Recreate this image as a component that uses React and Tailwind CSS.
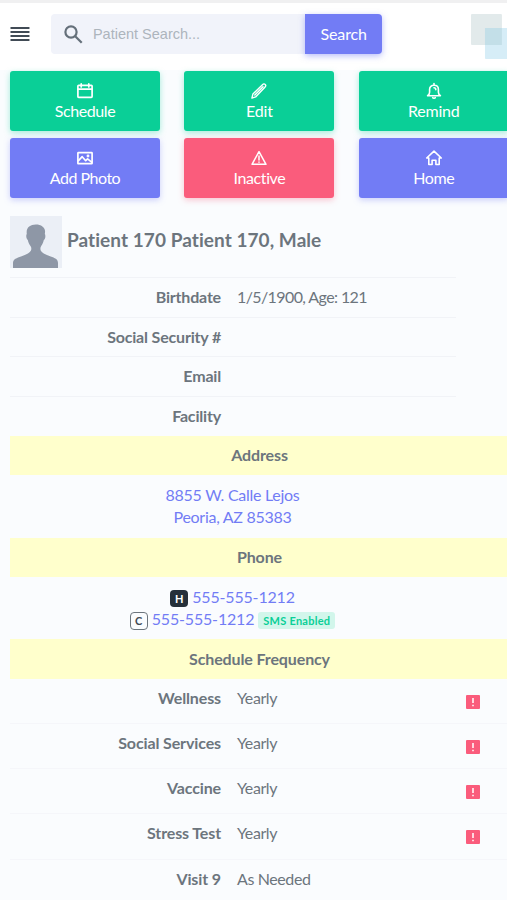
import React from "react";

const icon = "block h-[18px] w-[18px]";
const line = { fill: "none", stroke: "currentColor", strokeWidth: 1.7, strokeLinejoin: "round", strokeLinecap: "round" };

const CalendarIcon = () => (
  <svg className={icon} viewBox="0 0 18 18" {...line}>
    <rect x="1.9" y="3.3" width="14.2" height="12" rx="0.8" />
    <path d="M2 7.2h14M5.2 1.9v3M12.8 1.9v3" />
  </svg>
);
const PencilIcon = () => (
  <svg className={icon} viewBox="0 0 18 18" {...line} strokeWidth="1.4">
    <path d="M1.900 16.100l1-4L12.500 2.700c1-1 2-1 2.700-.3s.7 1.800-.3 2.800L5.600 14.900zM4.800 12.900L13 4.700" />
  </svg>
);
const BellIcon = () => (
  <svg className={icon} viewBox="0 0 18 18" {...line} strokeWidth="1.600">
    <path d="M2.600 13.700h12.800c-1.300-.9-2-2-2-3.500V7.300c0-2.500-1.900-4.100-4.400-4.100S4.600 4.800 4.600 7.300v2.900c0 1.500-.7 2.600-2 3.500zM9 1.500v1.500M9 5.800c1.200 0 1.800.8 1.800 2" />
    <path d="M7.700 15.600c.4.800 2.200.8 2.600 0" />
  </svg>
);
const PhotoIcon = () => (
  <svg className={icon} viewBox="0 0 18 18" {...line}>
    <rect x="1.900" y="3.700" width="14.200" height="11" rx="0.500" />
    <path d="M2.500 11.700l3.700-4 3.500 4 1.900-1.900 4 3.400" />
    <circle cx="12" cy="7" r="0.600" />
  </svg>
);
const WarningIcon = () => (
  <svg className={icon} viewBox="0 0 18 18" {...line} strokeWidth="1.500">
    <path d="M9 2.700L16 15.300H2zM9 7v4M9 13v.3" />
  </svg>
);
const HomeIcon = () => (
  <svg className={icon} viewBox="0 0 18 18" {...line} strokeWidth="1.600">
    <path d="M1.700 9L9 2.200 16.300 9h-2.100v6.500h-3.300v-4.300H7.100v4.300H3.800V9z" />
  </svg>
);

const green = "bg-[#0acf97] shadow-[0_2px_6px_rgba(10,207,151,0.35)]";
const blue = "bg-[#727cf5] shadow-[0_2px_6px_rgba(114,124,245,0.35)]";
const red = "bg-[#fa5c7c] shadow-[0_2px_6px_rgba(250,92,124,0.35)]";

const actions = [
  ["Schedule", CalendarIcon, green, "tracking-[-0.4px]"],
  ["Edit", PencilIcon, green, "tracking-[-0.2px]"],
  ["Remind", BellIcon, green, "tracking-[-0.2px]"],
  ["Add Photo", PhotoIcon, blue, "tracking-[-0.5px]"],
  ["Inactive", WarningIcon, red, "tracking-[-0.4px]"],
  ["Home", HomeIcon, blue, "tracking-[-0.4px]"],
];

const Section = ({ children }) => (
  <h2 className="flex h-[39.500px] w-[499px] items-center justify-center bg-[#ffffcc] pb-px text-[16px] font-bold tracking-[-0.120px]">{children}</h2>
);

const Field = ({ label, value }) => (
  <div className="flex h-[39.700px] w-[446px] items-center border-t border-[#f1f3f7] pb-px">
    <span className="w-[211px] text-right font-bold tracking-[-0.180px]">{label}</span>
    <span className="ml-4 tracking-[-0.600px]">{value}</span>
  </div>
);

const Frequency = ({ label, value, alert }) => (
  <div className="flex h-[45.200px] w-[499px] items-start border-b border-[#f5f6fa] pt-[7px] leading-[24px]">
    <span className="w-[211px] text-right font-bold tracking-[-0.120px]">{label}</span>
    <span className="ml-4 w-[229px] tracking-[-0.400px]">{value}</span>
    {alert && (
      <svg className="mt-[9px] h-[14px] w-[14px]" viewBox="0 0 14 14">
        <rect width="14" height="14" rx="1" fill="#fa5c7c" />
        <path d="M7 3v5M7 9.700v1.500" stroke="#fff" strokeWidth="1.500" />
      </svg>
    )}
  </div>
);

export default function App() {
  return (
    <div className="h-[900px] w-[507px] overflow-hidden bg-[#fafcfe] font-['Lato',sans-serif] text-[16px] text-[#6c757d]">
      <header className="flex h-[70px] items-start border-t-[3px] border-[#f0f0f1] bg-white pt-[11px]">
        <svg className="mt-[13px] ml-[10px] h-[14px] w-[20px]" viewBox="0 0 20 14" stroke="#414b55" strokeWidth="2">
          <path d="M0.500 1h19M0.500 5h19M0.500 9h19M0.500 13h19" />
        </svg>
        <div className="ml-[21px] flex h-10 w-[255px] items-center rounded-l bg-[#f1f3fa]">
          <svg className="ml-[13px] h-[19px] w-[19px]" viewBox="0 0 19 19" fill="none" stroke="#65707a" strokeWidth="2.200">
            <circle cx="7" cy="7" r="5.600" />
            <path d="M11.200 11.200l6.500 6.500" />
          </svg>
          <span className="mt-[2px] ml-[10px] font-['Liberation_Sans',sans-serif] text-[14.500px] text-[#adb5bd]">Patient Search...</span>
        </div>
        <button className="h-10 w-[77px] rounded-r bg-[#727cf5] pb-px tracking-[-0.150px] text-white shadow-[0_2px_6px_rgba(114,124,245,0.5)]">Search</button>
        <svg className="ml-[88px] h-[46px] w-[37px]" viewBox="0 0 37 46">
          <rect x="1" width="31" height="31" rx="1" fill="#e2eaeb" />
          <rect x="15" y="14" width="32" height="31" rx="1" fill="#d6edf7" />
          <path d="M15 14h17v17H15z" fill="#c3dfe8" />
        </svg>
      </header>
      <main className="pl-[10px]">
        <div className="grid w-[500px] grid-cols-[150px_150px_150px] gap-x-[24.400px] gap-y-[7px] pt-px">
          {actions.map(([label, Icon, color, fit]) => (
            <button key={label} className={`flex h-[60px] flex-col items-center rounded-[3px] pt-[11px] text-white ${color}`}>
              <Icon />
              <span className={`-mt-px leading-[24px] ${fit}`}>{label}</span>
            </button>
          ))}
        </div>
        <div className="mt-[18px] flex h-[61px] items-start">
          <svg className="h-[52px] w-[52px]" viewBox="0 0 52 52">
            <path fill="#ebeff6" d="M0 0h52v52H0z" />
            <path fill="#8e97a6" d="M3 52v-5c0-4 4-5 8-6.500 5-2 9-3.500 10-6 .6-2 .4-3-.5-4.500-1.500-2-2.300-4-2.700-6-1.600-.8-2-5-1-6-1-6 3-9.500 9-9.500s10.500 3.500 9 9.500c1 1 .7 5.200-1 6-.4 2-1.200 4-2.600 6-.9 1.500-1 2.500-.5 4.500 1 2.500 5 4 10 6 4 1.500 7.300 2.500 7.300 6.500v5z" />
          </svg>
          <h1 className="mt-[11px] ml-[5px] text-[19px] leading-[26px] font-bold tracking-[0.060px]">Patient 170 Patient 170, Male</h1>
        </div>
        <Field label="Birthdate" value="1/5/1900, Age: 121" />
        <Field label="Social Security #" />
        <Field label="Email" />
        <Field label="Facility" />
        <Section>Address</Section>
        <div className="flex h-[62.300px] w-[445px] flex-col items-center pt-[9px] leading-[22px] tracking-[-0.280px] text-[#727cf5]">
          <span>8855 W. Calle Lejos</span>
          <span>Peoria, AZ 85383</span>
        </div>
        <Section>Phone</Section>
        <div className="flex h-[62.300px] w-[445px] flex-col items-center pt-[9px] leading-[22px] tracking-[-0.170px] text-[#727cf5]">
          <span className="flex h-[22px] items-center gap-1">
            <b className="mt-[3px] flex h-[17px] w-[18px] items-center justify-center rounded-[4px] bg-[#252f39] text-[11px] text-white">H</b>
            <span>555-555-1212</span>
          </span>
          <span className="flex h-[22px] items-center gap-1">
            <b className="mt-[3px] flex h-[18px] w-[18px] items-center justify-center rounded-[4px] border border-[#6c757d] text-[11px] text-[#414b55]">C</b>
            <span>555-555-1212</span>
            <b className="mt-[3px] flex h-[17px] w-[77px] items-center justify-center rounded-[3px] bg-[#d2f6eb] text-[11px] font-bold tracking-[0.250px] text-[#0acf97]">SMS Enabled</b>
          </span>
        </div>
        <Section>Schedule Frequency</Section>
        <Frequency label="Wellness" value="Yearly" alert />
        <Frequency label="Social Services" value="Yearly" alert />
        <Frequency label="Vaccine" value="Yearly" alert />
        <Frequency label="Stress Test" value="Yearly" alert />
        <Frequency label="Visit 9" value="As Needed" />
      </main>
    </div>
  );
}
